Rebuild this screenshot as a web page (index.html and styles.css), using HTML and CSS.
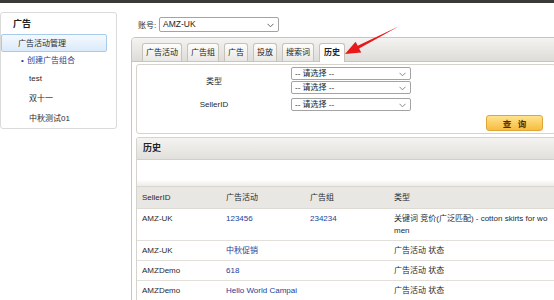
FILE: index.html
```html
<!DOCTYPE html>
<html lang="zh">
<head>
  <meta charset="UTF-8" />
  <title>广告 - 历史</title>
  <link rel="stylesheet" href="styles.css">
</head>
<body>
  <div class="topbar"></div>
  <div class="page">
    <div class="side">
      <div class="side-panel">
        <div class="side-head">广告</div>
        <ul class="side-menu">
          <li class="active">广告活动管理</li>
          <li class="add"><span class="dot">•</span>创建广告组合</li>
          <li class="leaf">test</li>
          <li class="leaf">双十一</li>
          <li class="leaf">中秋测试01</li>
        </ul>
      </div>
    </div>

    <div class="main">
      <div class="account">
        <span class="account-label">账号:</span>
        <div class="select select-account">AMZ-UK
          <svg class="chev" width="7" height="5" viewBox="0 0 7 5"><polyline points="0.5,0.8 3.5,3.8 6.5,0.8" fill="none" stroke="#666" stroke-width="1"/></svg>
        </div>
      </div>

      <div class="tabs">
        <ul class="tab-nav">
          <li>广告活动</li>
          <li>广告组</li>
          <li>广告</li>
          <li>投放</li>
          <li>搜索词</li>
          <li class="current">历史</li>
        </ul>
        <div class="tab-panel">
          <!-- 筛选 -->
          <div class="box filter">
            <div class="filter-grid">
              <div class="label type-label">类型</div>
              <div class="select">-- 请选择 --
                <svg class="chev" width="7" height="5" viewBox="0 0 7 5"><polyline points="0.5,0.8 3.5,3.8 6.5,0.8" fill="none" stroke="#888" stroke-width="1"/></svg>
              </div>
              <div class="select">-- 请选择 --
                <svg class="chev" width="7" height="5" viewBox="0 0 7 5"><polyline points="0.5,0.8 3.5,3.8 6.5,0.8" fill="none" stroke="#888" stroke-width="1"/></svg>
              </div>
              <div class="label seller-label">SellerID</div>
              <div class="select seller-select">-- 请选择 --
                <svg class="chev" width="7" height="5" viewBox="0 0 7 5"><polyline points="0.5,0.8 3.5,3.8 6.5,0.8" fill="none" stroke="#888" stroke-width="1"/></svg>
              </div>
            </div>
            <div class="actions">
              <button class="btn-query">查 询</button>
            </div>
          </div>

          <!-- 历史 -->
          <div class="box history">
            <div class="box-head">历史</div>
            <div class="toolbar"></div>
            <table>
              <colgroup>
                <col class="c1"><col class="c2"><col class="c3"><col class="c4">
              </colgroup>
              <thead>
                <tr>
                  <th>SellerID</th>
                  <th>广告活动</th>
                  <th>广告组</th>
                  <th>类型</th>
                </tr>
              </thead>
              <tbody>
                <tr>
                  <td>AMZ-UK</td>
                  <td><a href="#">123456</a></td>
                  <td><a href="#">234234</a></td>
                  <td>关键词 竞价(广泛匹配) - cotton skirts for women</td>
                </tr>
                <tr>
                  <td>AMZ-UK</td>
                  <td><a href="#">中秋促销</a></td>
                  <td></td>
                  <td>广告活动 状态</td>
                </tr>
                <tr>
                  <td>AMZDemo</td>
                  <td><a href="#">618</a></td>
                  <td></td>
                  <td>广告活动 状态</td>
                </tr>
                <tr>
                  <td>AMZDemo</td>
                  <td><a href="#">Hello World Campaign3</a></td>
                  <td></td>
                  <td>广告活动 状态</td>
                </tr>
              </tbody>
            </table>
          </div>
        </div>
      </div>
    </div>
  </div>

  <svg class="arrow" width="60" height="34" viewBox="340 24 60 34">
    <polygon points="399,26.3 359.1,48.6 361.3,52.6 345,54 355.6,41.8 357.7,45.8" fill="#e8191a"/>
  </svg>
</body>
</html>
```

FILE: styles.css
```css
* {margin: 0; padding: 0; box-sizing: border-box;}
html, body {overflow: hidden; height: 100%;}
body {font-family: "Liberation Sans", "Noto Sans CJK SC", sans-serif; font-size: 8px; color: #2a2a2a; background: #fff; position: relative;}
ul {list-style: none;}
a {color: #233d96; text-decoration: none;}

.topbar {height: 3px; background-color: #3a3a38;}
.page {display: flex; align-items: flex-start;}

/* 侧栏 */
.side {width: 117px; flex: none; padding-top: 9px;}
.side-panel {border: 1px solid #dadada; border-radius: 3px; background: #fff;}
.side-head {height: 21px; line-height: 22px; padding-left: 12px; font-size: 9px; font-weight: bold; color: #222;}
.side-menu li {padding-left: 28px; height: 20px; line-height: 21px; color: #2a2a2a;}
.side-menu .active {height: 18px; line-height: 17px; margin: 0 9px 0 0; padding-left: 16px; border: 1px solid #a9cbea; border-radius: 2px; background: linear-gradient(#f4f9fe, #dbeafa);}
.side-menu .add {height: 16px; line-height: 18px; padding-left: 20px; color: #2a3d94;}
.side-menu .dot {display: inline-block; width: 6px;}

/* 主体 */
.main {width: 430px; flex: none; margin-left: 14px; padding-top: 14px;}
.account {display: flex; align-items: center; height: 15px; margin-bottom: 5px; padding-left: 7px;}
.account-label {width: 21px;}
.select {position: relative; height: 13px; line-height: 11px; padding-left: 3px; border: 1px solid #a3a3a3; border-radius: 2px; background: #fff; color: #222; white-space: nowrap;}
.select .chev {position: absolute; right: 4px; top: 4px;}
.select-account {width: 120px; height: 15px; line-height: 13px; font-size: 8.5px;}
.select-account .chev {top: 5px;}

/* 标签页 */
.tabs {border: 1px solid #c8c5bf; border-radius: 4px; background: #fff;}
.tab-nav {display: flex; align-items: flex-end; height: 24px; padding-left: 10px; border-bottom: 1px solid #c8c5bf; background: linear-gradient(#f4f3f1, #dedcd7); border-radius: 3px 3px 0 0;}
.tab-nav li {height: 18px; line-height: 17px; padding: 0 3px; margin-right: 5px; border: 1px solid #c5c2bb; border-bottom: none; border-radius: 3px 3px 0 0; background: linear-gradient(#fdfdfc, #e9e7e3); color: #222;}
.tab-nav li.current {height: 19px; margin-bottom: -1px; padding: 0 4px; background: #fff; font-weight: bold;}
.tab-panel {padding: 2px 4px 0 4px;}

.box {border: 1px solid #d6d3cd; border-radius: 3px; background: #fff;}
.filter {padding: 2px 0 2px 0;}
.filter-grid {display: grid; grid-template-columns: 154px 120px; row-gap: 1px;}
.label {text-align: center;}
.type-label {grid-row: span 2; align-self: center;}
.seller-label, .seller-select {margin-top: 3px;}
.seller-label {line-height: 13px;}
.actions {padding: 4px 0 0 349px;}
.btn-query {width: 57px; height: 16px; border: 1px solid #e0a63a; border-radius: 3px; background: linear-gradient(#ffe38e, #f8bc3f); color: #4a3300; font-family: inherit; font-size: 8.5px; font-weight: bold; letter-spacing: 2px; text-indent: 2px;}

.history {margin-top: 3px; border-bottom: none; border-radius: 3px 3px 0 0;}
.box-head {height: 22px; line-height: 21px; padding-left: 6px; border-bottom: 1px solid #d2cfc9; background: linear-gradient(#f4f3f1, #e2e0dc); font-size: 9px; font-weight: bold; color: #222;}
.toolbar {height: 27px; border-bottom: 1px solid #d9d6d0; background: linear-gradient(#fff 75%, #eeece9);}

table {width: 420px; table-layout: fixed; border-collapse: collapse;}
col.c1, col.c2, col.c3 {width: 84px;}
col.c4 {width: 168px;}
th, td {padding: 4px 5px 3px 5px; line-height: 12px; text-align: left; vertical-align: top; border-bottom: 1px solid #e3e0db; word-break: break-all;}
th {height: 21px; padding: 5px 5px 4px 5px; background-color: #e9e7e3; font-weight: normal; border-bottom: 1px solid #dedbd5;}

/* 标注箭头 */
.arrow {position: absolute; left: 340px; top: 24px;}
```
